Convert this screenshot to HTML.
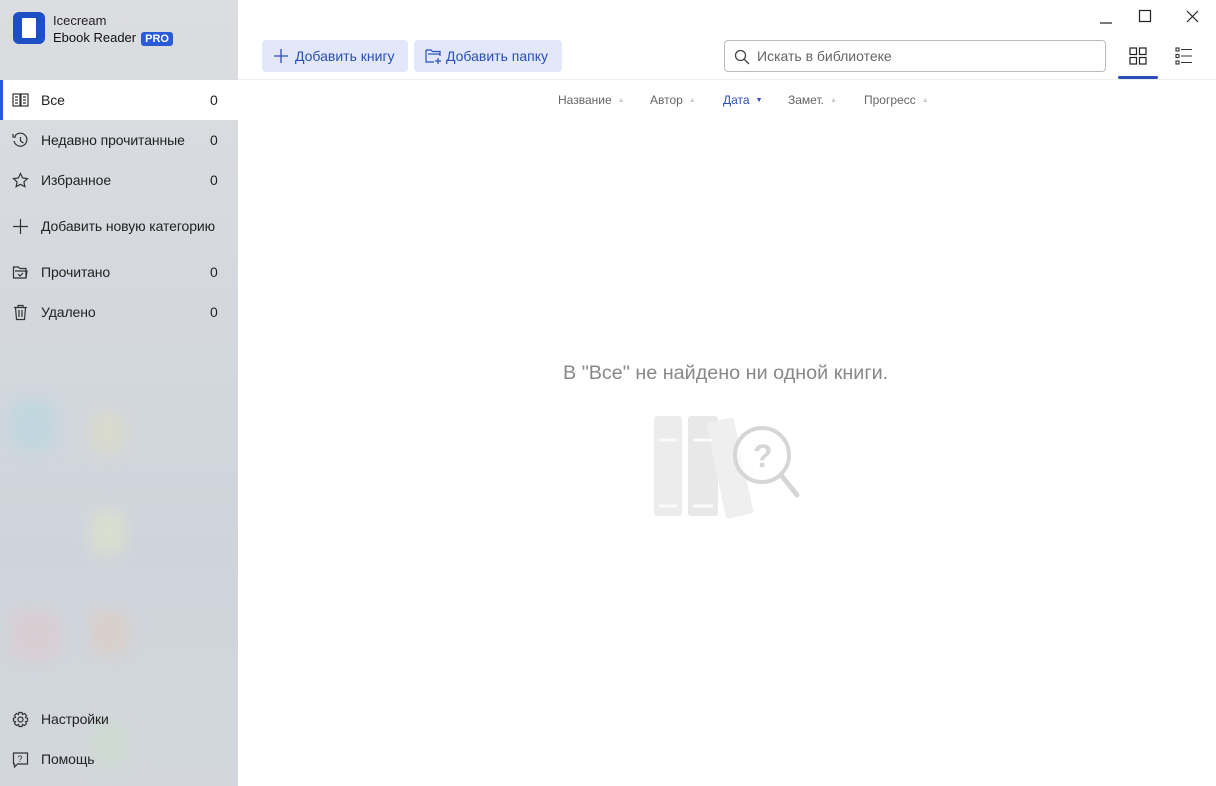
<!DOCTYPE html>
<html><head><meta charset="utf-8"><style>
*{margin:0;padding:0;box-sizing:border-box}
body{width:1216px;height:786px;font-family:"Liberation Sans",sans-serif;background:#fff;position:relative;overflow:hidden;color:#222}
.sb{position:absolute;left:0;top:0;width:238px;height:786px;background:linear-gradient(180deg,#dcdde0 0%,#d4d8de 40%,#cfd4dc 70%,#d3d7dd 100%)}
.blob{position:absolute;border-radius:12px;filter:blur(8px);opacity:.35}
.logo{position:absolute;left:13px;top:12px;width:32px;height:32px;border-radius:6px;background:#1f4fc4}
.logo i{position:absolute;left:9px;top:6px;width:14px;height:20px;background:#fff;border-radius:1px}
.t1{position:absolute;left:53px;top:13px;font-size:13px;color:#222}
.t2{position:absolute;left:53px;top:30px;font-size:13px;color:#111}
.pro{display:inline-block;background:#2a5bd7;color:#fff;font-size:11px;font-weight:bold;padding:1px 4px;border-radius:3px;margin-left:5px}
.it{position:absolute;left:0;width:238px;height:40px;font-size:14px;color:#222;display:flex;align-items:center}
.it .ic{position:absolute;left:12px;top:12px;width:17px;height:17px}
.it .lb{position:absolute;left:41px;letter-spacing:-0.1px}
.it .n{position:absolute;left:210px}
.act{background:#fff;box-shadow:inset 3px 0 0 #2a5bd7}
.btn{position:absolute;top:40px;height:32px;background:#e2e8fa;border-radius:4px;color:#2a4fb8;font-size:14px;display:flex;align-items:center}
.search{position:absolute;left:724px;top:40px;width:382px;height:32px;border:1px solid #bbb;border-radius:4px;font-size:14px;color:#666;display:flex;align-items:center;padding-left:32px}
.sort{position:absolute;top:93px;font-size:12px;color:#666}
.sort span{font-size:7px;color:#ccc;margin-left:6px;vertical-align:2px}
</style></head><body>
<div class="sb">
<div class="blob" style="left:10px;top:400px;width:45px;height:50px;background:#9fd8e0"></div>
<div class="blob" style="left:90px;top:410px;width:35px;height:45px;background:#e8e0b0"></div>
<div class="blob" style="left:90px;top:510px;width:35px;height:45px;background:#eef0b8"></div>
<div class="blob" style="left:10px;top:610px;width:50px;height:50px;background:#e8c0c0"></div>
<div class="blob" style="left:90px;top:610px;width:40px;height:45px;background:#e8c4a8"></div>
<div class="blob" style="left:90px;top:720px;width:40px;height:50px;background:#c8e0c0"></div>
<div class="logo"><i></i></div>
<div class="t1">Icecream</div>
<div class="t2">Ebook Reader<span class="pro">PRO</span></div>
</div>
<div class="it act" style="top:80px"><svg class="ic" viewBox="0 0 17 17" fill="none" stroke="#333" stroke-width="1.2"><rect x="1" y="2" width="7" height="12"/><rect x="9" y="2" width="7" height="12"/><path d="M3 5h3M3 8h3M3 11h3M11 5h3M11 8h3M11 11h3"/></svg><span class="lb">Все</span><span class="n">0</span></div>
<div class="it" style="top:120px"><svg class="ic" viewBox="0 0 17 17" fill="none" stroke="#333" stroke-width="1.2"><path d="M3 4A6.5 6.5 0 1 1 2 9"/><path d="M1 2v3h3M8.5 5v4l3 2"/></svg><span class="lb">Недавно прочитанные</span><span class="n">0</span></div>
<div class="it" style="top:160px"><svg class="ic" viewBox="0 0 17 17" fill="none" stroke="#333" stroke-width="1.2"><path d="M8.5 1.5l2.1 4.5 4.9.6-3.6 3.3 1 4.8-4.4-2.4-4.4 2.4 1-4.8L1.5 6.6l4.9-.6z"/></svg><span class="lb">Избранное</span><span class="n">0</span></div>
<div class="it" style="top:206px"><svg class="ic" viewBox="0 0 17 17" fill="none" stroke="#333" stroke-width="1.2"><path d="M8.5 1v15M1 8.5h15"/></svg><span class="lb">Добавить новую категорию</span></div>
<div class="it" style="top:252px"><svg class="ic" viewBox="0 0 17 17" fill="none" stroke="#333" stroke-width="1.2"><path d="M1.5 3h5l1.5 1.5h6v9.5h-12.5z"/><path d="M3 7h12l-1 7"/><path d="M6 10l2 2 3-3"/></svg><span class="lb">Прочитано</span><span class="n">0</span></div>
<div class="it" style="top:292px"><svg class="ic" viewBox="0 0 17 17" fill="none" stroke="#333" stroke-width="1.2"><path d="M2 3.5h13M6 3.5V1.5h5v2M3.5 3.5l1 12h8l1-12M7 6v7M10 6v7"/></svg><span class="lb">Удалено</span><span class="n">0</span></div>
<div class="it" style="top:699px"><svg class="ic" viewBox="0 0 17 17" fill="none" stroke="#333" stroke-width="1.2"><circle cx="8.5" cy="8.5" r="2.5"/><path d="M7 1.5h3l.5 2 2-1 2 2-1 2 2 .5v3l-2 .5 1 2-2 2-2-1-.5 2H7l-.5-2-2 1-2-2 1-2-2-.5V7l2-.5-1-2 2-2 2 1z"/></svg><span class="lb">Настройки</span></div>
<div class="it" style="top:739px"><svg class="ic" viewBox="0 0 17 17" fill="none" stroke="#333" stroke-width="1.2"><path d="M1.5 2h14v11h-10l-3 3v-3h-1z"/><text x="5.5" y="11" font-size="9" fill="#333" stroke="none" font-family="Liberation Sans">?</text></svg><span class="lb">Помощь</span></div>

<svg style="position:absolute;left:1090px;top:8px" width="120" height="20" fill="none" stroke="#222" stroke-width="1.2"><path d="M10 15h12"/><rect x="49.5" y="2.5" width="11" height="11"/><path d="M97 3l11 11M108 3l-11 11"/></svg>

<div class="btn" style="left:262px;width:146px"><svg style="margin:0 7px 0 12px" width="14" height="14" stroke="#2a4fb8" stroke-width="1.3"><path d="M7 0v14M0 7h14"/></svg>Добавить книгу</div>
<div class="btn" style="left:414px;width:148px"><svg style="margin:0 4px 0 11px" width="17" height="16" fill="none" stroke="#2a4fb8" stroke-width="1.2"><path d="M1 2h5l1.5 1.5H15V8M1 2v12h8"/><path d="M3 6h12"/><path d="M13 10v6M10 13h6"/></svg>Добавить папку</div>
<div class="search"><svg style="position:absolute;left:9px;top:8px" width="16" height="16" fill="none" stroke="#444" stroke-width="1.3"><circle cx="6.5" cy="6.5" r="5"/><path d="M10 10l5 5"/></svg>Искать в библиотеке</div>
<svg style="position:absolute;left:1129px;top:47px" width="18" height="18" fill="none" stroke="#222" stroke-width="1.2"><rect x="1" y="1" width="6.5" height="6.5"/><rect x="10.5" y="1" width="6.5" height="6.5"/><rect x="1" y="10.5" width="6.5" height="6.5"/><rect x="10.5" y="10.5" width="6.5" height="6.5"/></svg>
<svg style="position:absolute;left:1175px;top:47px" width="18" height="18" fill="none" stroke="#333" stroke-width="1.1"><rect x="1" y="1" width="3" height="3"/><rect x="1" y="7.5" width="3" height="3"/><rect x="1" y="14" width="3" height="3"/><path d="M6 2.5h11M6 9h11M6 15.5h11"/></svg>
<div style="position:absolute;left:1118px;top:76px;width:40px;height:3px;background:#2a4fb8;border-radius:2px"></div>
<div style="position:absolute;left:238px;top:79px;width:978px;height:1px;background:#eee"></div>

<div class="sort" style="left:558px">Название<span>▲</span></div>
<div class="sort" style="left:650px">Автор<span>▲</span></div>
<div class="sort" style="left:723px;color:#2a4fb8">Дата<span style="color:#2a4fb8">▼</span></div>
<div class="sort" style="left:788px">Замет.<span>▲</span></div>
<div class="sort" style="left:864px">Прогресс<span>▲</span></div>

<div style="position:absolute;left:563px;top:362px;font-size:19.8px;color:#888;white-space:nowrap">В "Все" не найдено ни одной книги.</div>
<svg style="position:absolute;left:650px;top:410px" width="155" height="110">
<rect x="4" y="6" width="28" height="100" rx="3" fill="#ececec"/>
<rect x="38" y="6" width="30" height="100" rx="3" fill="#e8e8e8"/>
<rect x="76" y="8" width="28" height="98" rx="3" fill="#efefef" transform="rotate(-12 90 106)"/>
<path d="M9 30h18M9 96h18M43 30h20M43 96h20" stroke="#fafafa" stroke-width="3"/>
<circle cx="112" cy="45" r="27" fill="rgba(255,255,255,.7)" stroke="#d6d6d6" stroke-width="4"/>
<path d="M131 65l16 20" stroke="#d6d6d6" stroke-width="5" stroke-linecap="round"/>
<text x="103" y="57" font-size="32" font-weight="bold" fill="#d6d6d6" font-family="Liberation Sans">?</text>
</svg>
</body></html>
